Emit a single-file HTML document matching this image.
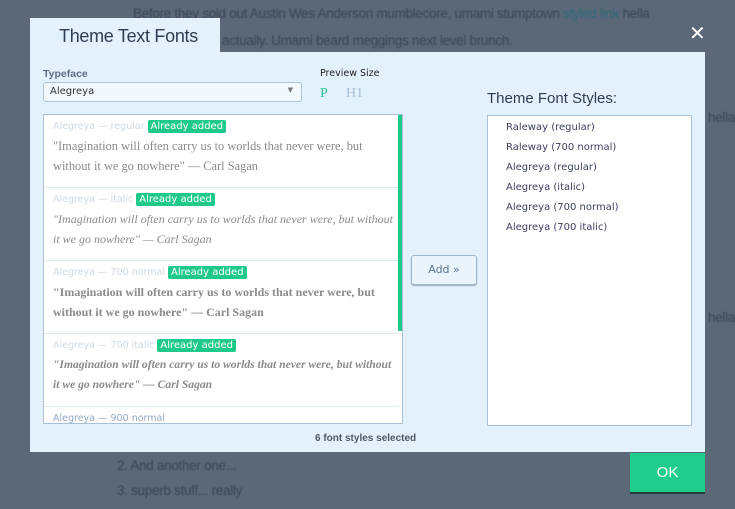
<!DOCTYPE html>
<html><head><style>
*{margin:0;padding:0;box-sizing:border-box}
body{width:735px;height:509px;overflow:hidden;background:#5b6878;position:relative;font-family:"DejaVu Sans","Liberation Sans",sans-serif}
.bg{position:absolute;color:#3a4556;font-family:"Liberation Sans",sans-serif;font-size:13.5px;filter:blur(0.6px);white-space:nowrap;letter-spacing:-0.3px}
.abs{position:absolute}
.tab{left:30px;top:18px;width:190px;height:36px;background:#e3f1fc;font-family:"Liberation Sans",sans-serif;font-size:18px;color:#2f3d52;padding:8px 0 0 29px;letter-spacing:-0.3px}
.body{left:30px;top:52px;width:675px;height:400px;background:#e3f1fc}
.lab{font-size:10.5px;color:#5e6e84;font-weight:bold;font-family:"Liberation Sans",sans-serif}
.sel{left:43px;top:82px;width:259px;height:20px;background:#f2f9fe;border:1px solid #b1c4d6;border-radius:3px;font-size:10px;color:#333;padding:3px 0 0 6px}
.list{left:43px;top:114px;width:360px;height:310px;background:#fff;border:1px solid #a9c0d5;overflow:hidden}
.item{height:73px;border-bottom:1px solid #dceaf4;padding:5px 0 0 9px;width:355px}
.l1{font-size:9.5px;color:#cfd9e3;height:15px;line-height:14px;white-space:nowrap}
.badge{display:inline-block;background:#1fc98a;color:#fff;font-size:10px;padding:0 3px;line-height:13px;border-radius:2px;margin-left:3px}
.q{font-family:"Liberation Serif",serif;font-size:12.4px;color:#8a8a8a;line-height:20px;margin-top:1px;padding-right:22px}
.right{left:487px;top:115px;width:205px;height:311px;background:#fff;border:1px solid #a9c0d5;padding:2px 0 0 18px}
.right div{font-size:10px;color:#3b3f5e;line-height:20px}
</style></head><body>
<div class="bg" style="left:133px;top:6px">Before they sold out Austin Wes Anderson mumblecore, umami stumptown <span style="color:#2e6a78">styled link</span> hella</div>
<div class="bg" style="left:222px;top:33px">actually. Umami beard meggings next level brunch.</div>
<div class="bg" style="left:708px;top:110px">hella</div>
<div class="bg" style="left:708px;top:310px">hella</div>
<div class="bg" style="left:117px;top:458px">2. And another one...</div>
<div class="bg" style="left:117px;top:483px">3. superb stuff... really</div>
<div class="abs" style="left:689px;top:22px;color:#fff;font-size:20px;font-weight:bold;font-family:'DejaVu Sans',sans-serif;line-height:22px">✕</div>
<div class="abs body"></div>
<div class="abs tab">Theme Text Fonts</div>
<div class="abs lab" style="left:43px;top:68px">Typeface</div>
<div class="abs sel">Alegreya<span style="position:absolute;right:8px;top:3px;font-size:7px;color:#777">▼</span></div>
<div class="abs" style="left:320px;top:68px;font-size:9.5px;color:#222">Preview Size</div>
<div class="abs" style="left:320px;top:86px;font-family:'Liberation Serif',serif;font-size:14px;color:#1fc98a">P</div>
<div class="abs" style="left:346px;top:86px;font-family:'Liberation Serif',serif;font-size:14px;color:#a7bdd4">H1</div>
<div class="abs list">
<div class="item"><div class="l1">Alegreya — regular<span class="badge">Already added</span></div><div class="q">"Imagination will often carry us to worlds that never were, but without it we go nowhere" — Carl Sagan</div></div>
<div class="item"><div class="l1">Alegreya — italic<span class="badge">Already added</span></div><div class="q" style="font-style:italic;font-size:12px;padding-right:0">"Imagination will often carry us to worlds that never were, but without it we go nowhere" — Carl Sagan</div></div>
<div class="item"><div class="l1">Alegreya — 700 normal<span class="badge">Already added</span></div><div class="q" style="font-weight:bold;font-size:12px">"Imagination will often carry us to worlds that never were, but without it we go nowhere" — Carl Sagan</div></div>
<div class="item"><div class="l1">Alegreya — 700 italic<span class="badge">Already added</span></div><div class="q" style="font-weight:bold;font-style:italic;font-size:11.6px;padding-right:0">"Imagination will often carry us to worlds that never were, but without it we go nowhere" — Carl Sagan</div></div>
<div class="item"><div class="l1" style="color:#8ea9c6">Alegreya — 900 normal</div></div>
<div class="abs" style="left:354px;top:0;width:5px;height:216px;background:#1fc98a"></div>
</div>
<div class="abs" style="left:411px;top:255px;width:66px;height:30px;border:1px solid #9db5cc;border-radius:3px;background:#e8f3fc;box-shadow:0 1px 1px #9ab;font-size:11px;color:#5a7590;text-align:center;line-height:27px">Add »</div>
<div class="abs" style="left:487px;top:90px;font-family:'Liberation Sans',sans-serif;font-size:15px;color:#2f3d52">Theme Font Styles:</div>
<div class="abs right"><div>Raleway (regular)</div><div>Raleway (700 normal)</div><div>Alegreya (regular)</div><div>Alegreya (italic)</div><div>Alegreya (700 normal)</div><div>Alegreya (700 italic)</div></div>
<div class="abs" style="left:315px;top:433px;font-family:'Liberation Sans',sans-serif;font-size:10px;font-weight:bold;color:#4d5866">6 font styles selected</div>
<div class="abs" style="left:630px;top:453px;width:75px;height:41px;background:#20cc8c;border-bottom:2px solid #2a3a40;color:#fff;font-family:'Liberation Sans',sans-serif;font-size:15px;text-align:center;line-height:40px">OK</div>
</body></html>
